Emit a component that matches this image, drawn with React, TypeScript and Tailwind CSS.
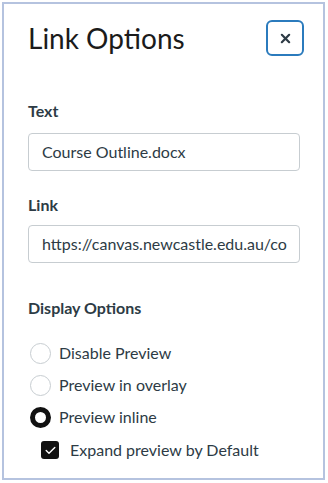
import React from 'react';

function Radio({ checked, label }: { checked?: boolean; label: string }) {
  return (
    <label className="flex items-center h-[32px]">
      <span
        className={
          checked
            ? 'ml-[2px] w-[21px] h-[21px] rounded-full border-[5px] border-[#111] bg-white'
            : 'ml-[2px] w-[21px] h-[21px] rounded-full border border-[#c7cdd1] bg-white'
        }
      />
      <span className="ml-[8px] text-[16px] text-[#2d3b45]">{label}</span>
    </label>
  );
}

export default function App() {
  return (
    <div className="w-[328px] h-[483px] bg-white pt-[2px] pl-[2px]" style={{ fontFamily: 'Lato, "Noto Sans", sans-serif' }}>
      <div className="w-[323px] h-[478px] border-2 border-[#b5c3df] px-[24px] pt-[16px]">
        <div className="flex items-center justify-between h-[36px]">
          <h1 className="text-[28px] leading-none text-[#1b1b1b]">Link Options</h1>
          <button className="w-[38px] h-[36px] mr-[-5px] rounded-[6px] border-2 border-[#2b7bbd] flex items-center justify-center">
            <svg width="11" height="11" viewBox="0 0 12 12">
              <path d="M2 2 L10 10 M10 2 L2 10" stroke="#2d3b45" strokeWidth="2.4" strokeLinecap="round" />
            </svg>
          </button>
        </div>

        <div className="mt-[45px] text-[16px] leading-[20px] font-bold text-[#2d3b45]">Text</div>
        <div className="mt-[12px] h-[38px] w-[272px] rounded-[4px] border border-[#c7cdd1] flex items-center px-[13px] text-[16px] text-[#2d3b45] overflow-hidden whitespace-nowrap">
          Course Outline.docx
        </div>

        <div className="mt-[24px] text-[16px] leading-[20px] font-bold text-[#2d3b45]">Link</div>
        <div className="mt-[10px] h-[38px] w-[272px] rounded-[4px] border border-[#c7cdd1] flex items-center px-[13px] text-[16px] text-[#2d3b45] overflow-hidden whitespace-nowrap">
          https://canvas.newcastle.edu.au/co
        </div>

        <div className="mt-[35px] text-[16px] leading-[20px] font-bold text-[#2d3b45]">Display Options</div>

        <div className="mt-[19px] flex flex-col">
          <Radio label="Disable Preview" />
          <Radio label="Preview in overlay" />
          <Radio checked label="Preview inline" />
          <label className="flex items-center h-[34px] pl-[13px]">
            <span className="w-[18px] h-[18px] rounded-[3px] bg-[#111] flex items-center justify-center">
              <svg width="11" height="9" viewBox="0 0 11 9">
                <path d="M1.2 4.6 L4 7.3 L9.8 1.4" fill="none" stroke="#fff" strokeWidth="1.4" strokeLinecap="round" strokeLinejoin="round" />
              </svg>
            </span>
            <span className="ml-[11px] text-[16px] text-[#2d3b45]">Expand preview by Default</span>
          </label>
        </div>
      </div>
    </div>
  );
}
